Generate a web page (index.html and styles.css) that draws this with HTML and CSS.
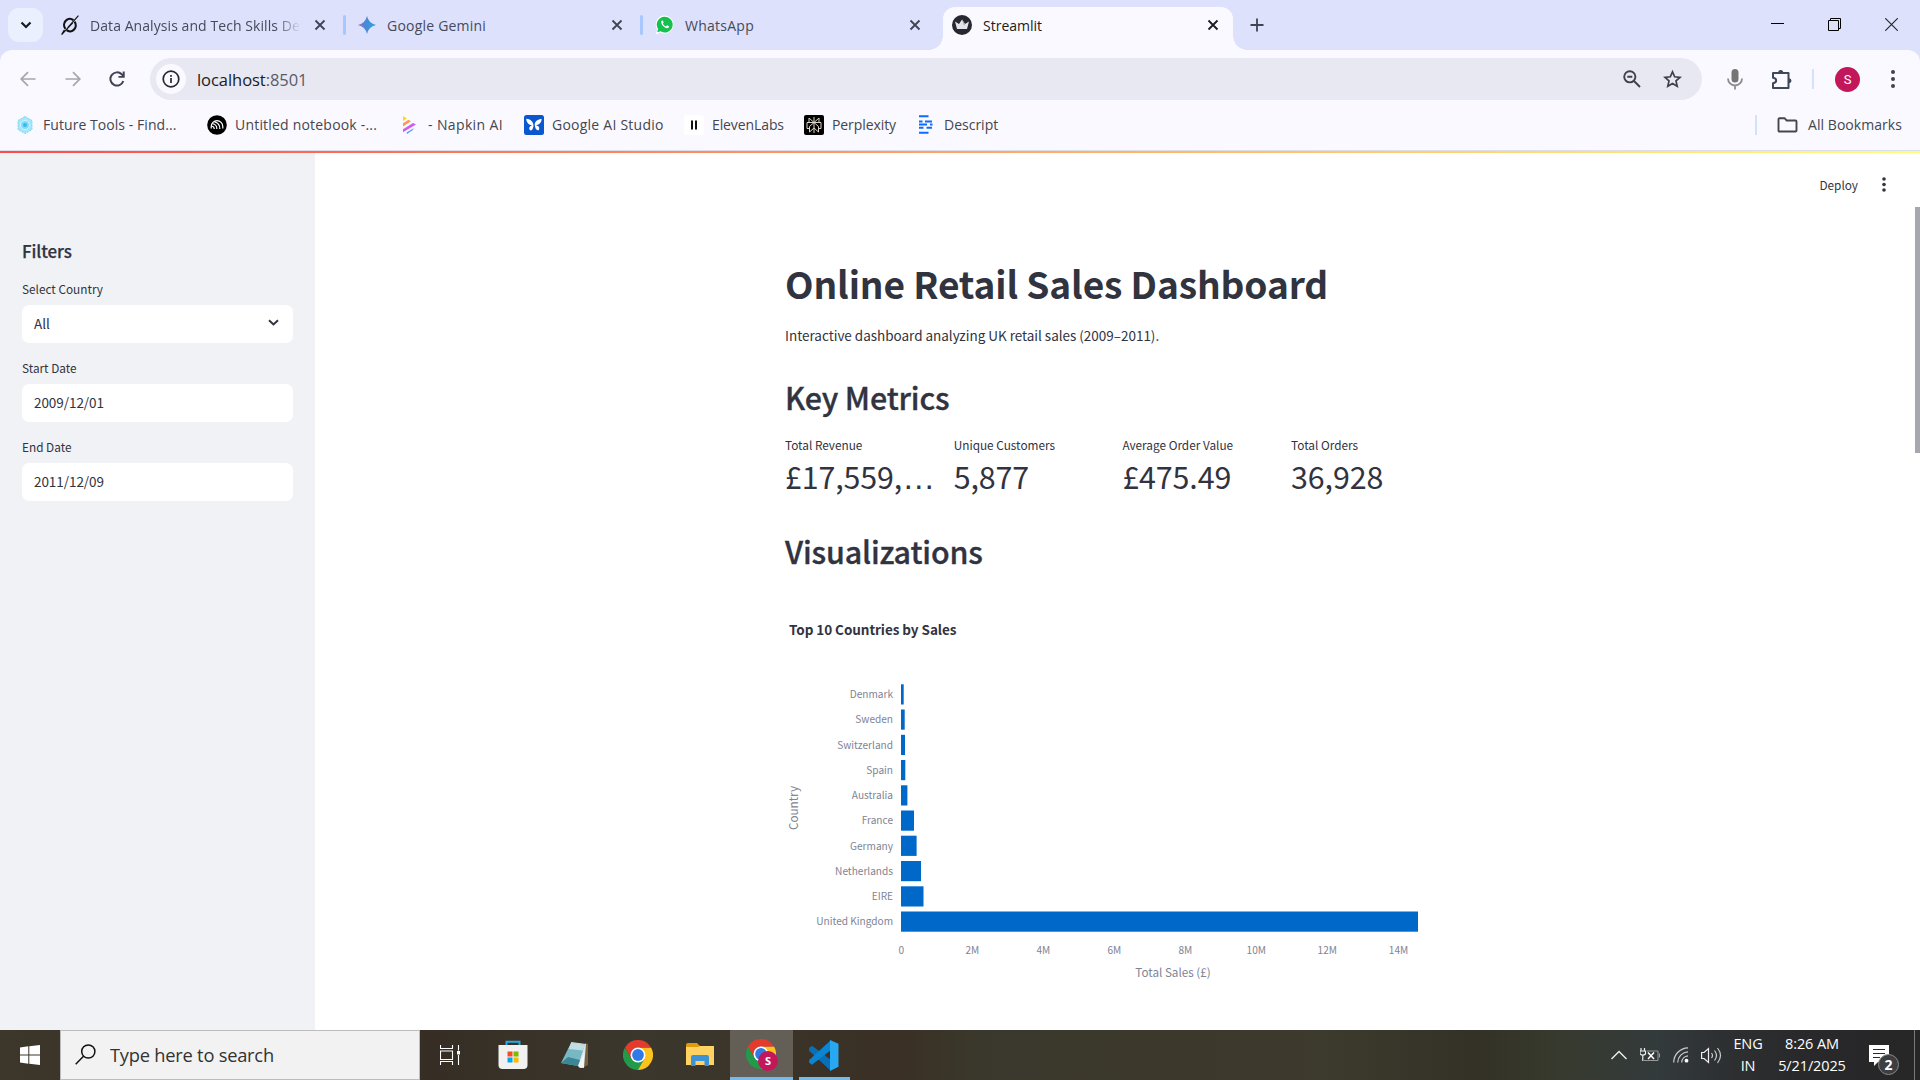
FILE: index.html
```html
<!DOCTYPE html>
<html lang="en">
<head>
<meta charset="utf-8">
<title>Streamlit</title>
<link rel="stylesheet" href="styles.css">
</head>
<body>
<svg class="defs" width="0" height="0" aria-hidden="true">
  <symbol id="x" viewBox="0 0 12 12"><path d="M1.500 1.500l9 9M10.500 1.500l-9 9" fill="none" stroke="currentColor" stroke-width="1.800"/></symbol>
  <symbol id="chrome" viewBox="0 0 30 30">
    <path d="M15 7.500H28A15 15 0 0 1 15 30z" fill="#fcc31e"/>
    <path d="M2 7.500L8.500 18.700L15 22L21.500 18.700L15 30A15 15 0 0 1 2 7.500z" fill="#229a49"/>
    <path d="M2 7.500A15 15 0 0 1 28 7.500H15L8.500 18.700z" fill="#e33b2e"/>
    <circle cx="15" cy="15" r="7.500" fill="#fff"/><circle cx="15" cy="15" r="5.900" fill="#3079e8"/>
  </symbol>
</svg>

<header class="tabstrip">
  <button class="tab-search"><svg width="12" height="8" viewBox="0 0 12 8"><path d="M1.500 1.500L6 6l4.500-4.500" fill="none" stroke="#1b1b1f" stroke-width="2.200"/></svg></button>
  <div class="tab tab-1">
    <svg class="fav" width="20" height="20" viewBox="0 0 20 22"><path d="M13.700 5.600A6.300 6.700 0 0 0 5 15.200M6.300 16.700A6.300 6.700 0 0 0 15 7.200" fill="none" stroke="#111" stroke-width="2.400"/><path d="M19.300.8L7.500 13.800M13 8.500L.8 21.500L3.700 16.500" fill="none" stroke="#111" stroke-width="1.300"/></svg>
    <span class="tab-title fade">Data Analysis and Tech Skills De</span>
    <svg class="close" width="12" height="12"><use href="#x"/></svg>
  </div>
  <i class="tab-sep"></i>
  <div class="tab tab-2">
    <svg class="fav" width="18" height="18" viewBox="0 0 18 18"><defs><linearGradient id="gem" x1="0" x2="1"><stop offset="0" stop-color="#9b72cb"/><stop offset=".4" stop-color="#4a87d6"/><stop offset="1" stop-color="#2ba6e0"/></linearGradient></defs><path d="M9 0Q10.700 7.300 18 9Q10.700 10.700 9 18Q7.300 10.700 0 9Q7.300 7.300 9 0z" fill="url(#gem)"/></svg>
    <span class="tab-title">Google Gemini</span>
    <svg class="close" width="12" height="12"><use href="#x"/></svg>
  </div>
  <i class="tab-sep"></i>
  <div class="tab tab-3">
    <svg class="fav" width="19" height="20" viewBox="0 0 19 20"><path d="M9.500.5a9 9 0 1 1-4.200 17L.5 19.500l1.800-5A9 9 0 0 1 9.500.5z" fill="#fff"/><path d="M9.500 1.700a7.900 7.900 0 1 1-3.900 14.600L2.200 17.300l1-3.200A7.900 7.900 0 0 1 9.500 1.700z" fill="#15c14e"/><path d="M6.800 5.500c-2.300 2 2.200 7.800 5.300 7.800 1.200 0 2-1 1.900-2l-2-1-1 1.200c-1.500-.6-2.600-1.700-3.200-3l.9-1-.9-2z" fill="#fff"/></svg>
    <span class="tab-title">WhatsApp</span>
    <svg class="close" width="12" height="12"><use href="#x"/></svg>
  </div>
  <div class="tab tab-active">
    <svg class="fav" width="20" height="20" viewBox="0 0 20 20"><circle cx="10" cy="10" r="10" fill="#262730"/><path d="M3 6.500l4 2.500 3-4.500L13 9l4-2.500L15 14H5z" fill="#e4e4e8"/><path d="M10 4.500L13 9l-1 2z" fill="#aaa"/></svg>
    <span class="tab-title">Streamlit</span>
    <svg class="close" width="12" height="12"><use href="#x"/></svg>
  </div>
  <svg class="newtab" width="14" height="14" viewBox="0 0 14 14"><path d="M7 .5v13M.5 7h13" stroke="#3f4354" stroke-width="1.800"/></svg>
  <div class="winctl">
    <svg width="13" height="13" viewBox="0 0 13 13"><path d="M0 5.500h13" stroke="#000"/></svg>
    <svg width="13" height="13" viewBox="0 0 13 13"><path d="M.5 2.500h10v10H.5zM2.500 2.500v-2h10v10h-2" fill="none" stroke="#000"/></svg>
    <svg width="13" height="13" viewBox="0 0 13 13"><path d="M.3.3l12.400 12.400M12.700.3L.3 12.700" stroke="#222" stroke-width="1.100"/></svg>
  </div>
</header>

<section class="chrome-top">
  <div class="toolbar">
    <div class="nav">
      <svg width="16" height="16" viewBox="0 0 16 16"><path d="M15.500 8H1.500M8 1.200L1.200 8L8 14.800" fill="none" stroke="#a5a6ae" stroke-width="1.700"/></svg>
      <svg width="16" height="16" viewBox="0 0 16 16"><path d="M.5 8h14M8 1.200L14.800 8L8 14.800" fill="none" stroke="#a5a6ae" stroke-width="1.700"/></svg>
      <svg width="16" height="16" viewBox="0 0 16 16"><path d="M14.300 10A6.600 6.600 0 1 1 12.700 3.300L14.500 5" fill="none" stroke="#3f4354" stroke-width="2"/><path d="M15.700.5V6.800H9.500V5H13.700V.5z" fill="#3f4354"/></svg>
    </div>
    <div class="omnibox">
      <span class="info"><svg width="18" height="18" viewBox="0 0 18 18"><circle cx="9" cy="9" r="7.800" fill="none" stroke="#27282e" stroke-width="1.700"/><path d="M9 8v5M9 5v1.700" stroke="#27282e" stroke-width="1.700"/></svg></span>
      <span class="url">localhost<span>:8501</span></span>
      <svg class="mag" width="18" height="18" viewBox="0 0 18 18"><circle cx="6.800" cy="6.800" r="5.600" fill="none" stroke="#3f4048" stroke-width="1.900"/><path d="M11 11l6 6M4.300 6.800h5" stroke="#3f4048" stroke-width="1.900"/></svg>
      <svg width="19" height="18" viewBox="0 0 19 18"><path d="M9.500 1.800l2.200 5 5.300.5-4 3.600 1.200 5.300-4.700-2.800-4.700 2.800L6 10.900 2 7.300l5.300-.5z" fill="none" stroke="#3f4048" stroke-width="1.700"/></svg>
    </div>
    <svg class="mic" width="16" height="21" viewBox="0 0 16 21"><rect x="4.500" y="0" width="7" height="13.500" rx="3.500" fill="#757575"/><path d="M1 9.500a7 7 0 0 0 14 0M8 16.500V20.500" fill="none" stroke="#8c8c8c" stroke-width="1.800"/></svg>
    <svg class="ext" width="21" height="21" viewBox="0 0 21 21"><path d="M2 4h15.500v15H2v-4.800c4.200-.6 4.200-4.800 0-5.400z" fill="none" stroke="#3f4759" stroke-width="2" stroke-linejoin="round"/><path d="M7.200 3.500a2.500 2.500 0 0 1 5 0zM18 9.200a2.500 2.500 0 0 1 0 5z" fill="#3f4759"/></svg>
    <i class="tool-sep"></i>
    <span class="avatar">S</span>
    <svg class="kebab" width="4" height="20" viewBox="0 0 4 20"><g fill="#3f4354"><circle cx="2" cy="3" r="2"/><circle cx="2" cy="10" r="2"/><circle cx="2" cy="17" r="2"/></g></svg>
  </div>
  <nav class="bookmarks">
    <a class="bm bm-1"><svg width="16" height="18" viewBox="0 0 16 18"><path d="M8 .5l7 4v9l-7 4-7-4v-9z" fill="#a5e6fb" stroke="#7bd6f5" stroke-dasharray="2 1"/><circle cx="8" cy="9" r="4.500" fill="#7fd9f8" stroke="#d6f5ff"/><circle cx="8" cy="9" r="2" fill="#35bdf0"/></svg><span>Future Tools - Find...</span></a>
    <a class="bm bm-2"><svg width="20" height="20" viewBox="0 0 20 20"><circle cx="10" cy="10" r="9.800" fill="#000"/><g fill="none" stroke="#fff" stroke-width="1.200"><path d="M4.200 13.500v-2a5.800 5.800 0 0 1 11.600 0v2"/><path d="M4.500 11a3.300 3.300 0 0 1 2.800 3M5.500 8.700a5 5 0 0 1 4.300 5.300M7.500 6.800A6.500 6.500 0 0 1 12.800 14"/></g></svg><span>Untitled notebook -...</span></a>
    <a class="bm bm-3"><svg width="15" height="18" viewBox="0 0 15 18"><path d="M1 0v5l4-2.600z" fill="#ffd911"/><path d="M1 7.200L6.500 3.700l2.500 1.600L1 10.400z" fill="#ff9757"/><path d="M1 13.300L11 6.900l3 1.600L1 16.300z" fill="#cc5df5"/><path d="M4.500 16.500L12 11.900l-1.500 2.300L5 18z" fill="#5a9cf8"/></svg><span>- Napkin AI</span></a>
    <a class="bm bm-4"><svg width="20" height="20" viewBox="0 0 20 20"><rect width="20" height="20" rx="2.500" fill="#0b57d0"/><path d="M9.500 10C9 6.500 6 3.700 2.200 3.700c.2 3.500 2.300 6.300 6 6.500C5.500 11 4.500 13 5.700 15c2.200 1.500 3.800-1.500 3.800-5zM10.700 9.500C11 6.300 14 4 17.600 4c0 3-2 5.800-5.800 6.300 3 .5 4.200 2.500 3.100 4.600-2 1.200-4-1.200-4.200-5.400z" fill="#fff"/></svg><span>Google AI Studio</span></a>
    <a class="bm bm-5"><svg width="20" height="20" viewBox="0 0 20 20"><rect width="20" height="20" rx="3" fill="#fff"/><path d="M8 5.500v9M12 5.500v9" stroke="#111" stroke-width="2"/></svg><span>ElevenLabs</span></a>
    <a class="bm bm-6"><svg width="20" height="20" viewBox="0 0 20 20"><rect width="20" height="20" rx="2" fill="#000"/><path d="M10 2v16M5 3l5 4.500L15 3v4.500H5zM3 7.500h14v6h-2.500M3 7.500v6h2.500M10 7.500L5.500 11.500v5.500L10 13l4.500 4v-5.500z" fill="none" stroke="#ddd6c8" stroke-width="1"/></svg><span>Perplexity</span></a>
    <a class="bm bm-7"><svg width="14" height="19" viewBox="0 0 14 19"><path d="M0 1.200h9.500M0 6.500h3.500M6 6.500h7M0 9.600h8M11 9.600h2.500M0 12.700h4.500M7.500 12.700h5.500M0 17.700h9.500" stroke="#0a6cff" stroke-width="2"/></svg><span>Descript</span></a>
    <i class="bm-sep"></i>
    <a class="bm bm-all"><svg width="21" height="16" viewBox="0 0 21 16"><path d="M2.500 1.200h5l2.200 2.300h8.800q1 0 1 1v9q0 1-1 1H2.500q-1 0-1-1v-11q0-1.300 1-1.300z" fill="none" stroke="#45464e" stroke-width="1.900"/></svg><span>All Bookmarks</span></a>
  </nav>
</section>
<div class="decoration"></div>

<main class="app">
  <aside class="sidebar">
    <h2>Filters</h2>
    <label>Select Country</label>
    <div class="field select"><span>All</span><svg width="11" height="8" viewBox="0 0 11 8"><path d="M1 1.300l4.500 4.200L10 1.300" fill="none" stroke="#31333f" stroke-width="2"/></svg></div>
    <label>Start Date</label>
    <div class="field"><span>2009/12/01</span></div>
    <label>End Date</label>
    <div class="field"><span>2011/12/09</span></div>
  </aside>
  <section class="content">
    <div class="app-toolbar"><span>Deploy</span><svg width="4" height="15" viewBox="0 0 4 15"><g fill="#31333f"><circle cx="2" cy="2" r="1.800"/><circle cx="2" cy="7.500" r="1.800"/><circle cx="2" cy="13" r="1.800"/></g></svg></div>
    <div class="scroll-area">
      <article class="page">
        <h1>Online Retail Sales Dashboard</h1>
        <p>Interactive dashboard analyzing UK retail sales (2009–2011).</p>
        <h2>Key Metrics</h2>
        <div class="metrics">
          <div><small>Total Revenue</small><b>£17,559,<span class="ellipsis">…</span></b></div>
          <div><small>Unique Customers</small><b>5,877</b></div>
          <div><small>Average Order Value</small><b>£475.49</b></div>
          <div><small>Total Orders</small><b>36,928</b></div>
        </div>
        <h2 class="viz">Visualizations</h2>
        <svg class="chart" width="660" height="380" viewBox="785 620 660 380">
          <text class="chart-title" x="789" y="635">Top 10 Countries by Sales</text>
          <g class="bars">
            <rect x="901" y="684.300" width="2.700" height="20.200"/>
            <rect x="901" y="709.500" width="3.700" height="20.200"/>
            <rect x="901" y="734.800" width="4" height="20.200"/>
            <rect x="901" y="760" width="4.300" height="20.200"/>
            <rect x="901" y="785.300" width="6.400" height="20.200"/>
            <rect x="901" y="810.500" width="13" height="20.200"/>
            <rect x="901" y="835.700" width="15.600" height="20.200"/>
            <rect x="901" y="861" width="20" height="20.200"/>
            <rect x="901" y="886.300" width="22.500" height="20.200"/>
            <rect x="901" y="911.500" width="517" height="20.200"/>
          </g>
          <g class="tick cats">
            <text x="893" y="698">Denmark</text>
            <text x="893" y="723">Sweden</text>
            <text x="893" y="749">Switzerland</text>
            <text x="893" y="774">Spain</text>
            <text x="893" y="799">Australia</text>
            <text x="893" y="824">France</text>
            <text x="893" y="850">Germany</text>
            <text x="893" y="875">Netherlands</text>
            <text x="893" y="900">EIRE</text>
            <text x="893" y="925">United Kingdom</text>
          </g>
          <g class="tick vals">
            <text x="901.300" y="954">0</text><text x="972.300" y="954">2M</text><text x="1043.300" y="954">4M</text><text x="1114.300" y="954">6M</text>
            <text x="1185.300" y="954">8M</text><text x="1256.300" y="954">10M</text><text x="1327.300" y="954">12M</text><text x="1398.500" y="954">14M</text>
          </g>
          <text class="axis" x="1173" y="977">Total Sales (£)</text>
          <text class="axis" transform="translate(798 808) rotate(-90)">Country</text>
        </svg>
      </article>
      <div class="scrollbar"></div>
    </div>
  </section>
</main>

<footer class="taskbar">
  <div class="start"><svg width="20" height="20" viewBox="0 0 20 20"><path d="M0 2.500L8.300 1.300V9.500H0zM9.300 1.200L20 0V9.500H9.300zM0 10.500H8.300V18.700L0 17.500zM9.300 10.500H20V20L9.300 18.800z" fill="#fff"/></svg></div>
  <div class="search"><svg width="21" height="21" viewBox="0 0 21 21"><circle cx="13.300" cy="7.500" r="6.600" fill="none" stroke="#111" stroke-width="1.500"/><path d="M8.500 12.300L.7 20.200" stroke="#111" stroke-width="1.500"/></svg><span>Type here to search</span></div>
  <div class="tasks">
    <div class="task task-view"><svg width="20" height="20" viewBox="0 0 20 20"><path d="M.5 0v3.500h12V0M.5 20v-3.500h12V20M.5 6h12v8.500H.5zM18.500 0v5.500M18.500 10v10" fill="none" stroke="#fff" stroke-width="1.100"/><path d="M17 6h3v3.500h-3z" fill="#fff"/></svg></div>
    <div class="task"><svg width="30" height="30" viewBox="0 0 30 30"><path d="M8.500 6V1.800h13V6" fill="none" stroke="#29a9e8" stroke-width="2"/><path d="M.5 5h29v20q0 4-4 4h-21q-4 0-4-4z" fill="#f1f1f1"/><path d="M9.500 11.500h5v5h-5z" fill="#f25022"/><path d="M15.500 11.500h5v5h-5z" fill="#7fba00"/><path d="M9.500 17.500h5v5h-5z" fill="#00a4ef"/><path d="M15.500 17.500h5v5h-5z" fill="#ffb900"/></svg></div>
    <div class="task"><svg width="28" height="28" viewBox="0 0 28 28"><path d="M24 2l3 1v21l-4 2z" fill="#79603c"/><path d="M10 1l15 2-2 24-5-.5z" fill="#dbe8ea"/><path d="M10 2l14 1.500L17 25 0 22z" fill="#78b8c4"/><path d="M10 2l14 1.500-2 6L7.500 8z" fill="#c2dde2"/><path d="M0 22l7-6 12 3-2 6z" fill="#3c8795"/><path d="M17 25l6-12v13l-3 1z" fill="#f2f5f5"/></svg></div>
    <div class="task"><svg width="30" height="30"><use href="#chrome"/></svg></div>
    <div class="task"><svg width="28" height="24" viewBox="0 0 28 24"><path d="M0 2q0-2 2-2h9l3 3h13v6H0z" fill="#e09a0b"/><path d="M0 4h12l2-1h14v19H0z" fill="#ffd262"/><path d="M5 23V14q0-2 2-2h14q2 0 2 2v9h-4.500v-5h-9v5z" fill="#3e92d8"/></svg></div>
    <div class="task current"><svg width="32" height="32" viewBox="0 0 32 32"><use href="#chrome" x="0" y="0" width="30" height="30"/><circle cx="22" cy="22" r="10" fill="#c2185b"/><text x="22" y="26">S</text></svg></div>
    <div class="task running"><svg width="31" height="31" viewBox="0 0 31 31"><path d="M1 8l3-2.300L23 20v11L1.200 11z" fill="#0a6fb5"/><path d="M1 22.500l3 2.300L23 10V0L1.200 20z" fill="#0a85d1"/><path d="M22 0l8.500 3.800v23L22 31z" fill="#29a8f2"/></svg></div>
  </div>
  <div class="tray">
    <svg class="t-up" width="16" height="10" viewBox="0 0 16 10"><path d="M.5 9L8 1.500 15.500 9" fill="none" stroke="#eee" stroke-width="1.400"/></svg>
    <svg class="t-bat" width="20" height="15" viewBox="0 0 20 15"><path d="M1 0v3M4.500 0v3M0 3h5.500v3Q2.800 8.500 0 6zM2.800 7v6" fill="none" stroke="#eee" stroke-width="1.200"/><path d="M7 3h11v9.500H4M19.500 5.500v4" fill="none" stroke="#999"/><path d="M8 4.500l6 6.500M14 4.500L8 11" stroke="#fff" stroke-width="1.500"/></svg>
    <svg class="t-wifi" width="16" height="16" viewBox="0 0 16 16"><g fill="none" stroke="#ccc" stroke-width="1.200"><path d="M.7 15.500A14.800 14.800 0 0 1 15 .8M4.700 15.500A10.800 10.800 0 0 1 15 4.900M8.700 15.500A7 7 0 0 1 15 8.900"/></g><circle cx="13.500" cy="13.700" r="1.900" fill="#fff"/></svg>
    <svg class="t-vol" width="21" height="17" viewBox="0 0 21 17"><path d="M.6 5.500h2.500L7.500 1.500v14L3.100 11.500H.6z" fill="none" stroke="#eee" stroke-width="1.200"/><g fill="none" stroke="#ccc" stroke-width="1.200"><path d="M10.500 6q2 2.500 0 5M13.500 3.500q4 5 0 10M16.500 1q6 7.500 0 15"/></g></svg>
    <div class="lang"><span>ENG</span><span>IN</span></div>
    <div class="clock"><span>8:26 AM</span><span>5/21/2025</span></div>
    <svg class="t-note" width="31" height="31" viewBox="0 0 31 31"><path d="M0 0h20v17H9l-4 4v-4H0z" fill="#fff"/><path d="M4 4.500h12M4 8.500h12M4 12.500h7" stroke="#2b2b2c" stroke-width="1.200"/><circle cx="19.500" cy="19.500" r="10" fill="#3d3e40" stroke="#8a8a8a"/><text x="19.500" y="24.500">2</text></svg>
    <i class="peek"></i>
  </div>
</footer>
</body>
</html>
```
FILE: styles.css
```css
* { box-sizing: border-box; }
body { margin: 0; width: 1920px; height: 1080px; overflow: hidden; background: #fff; font-family: "Open Sans", sans-serif; display: flex; flex-direction: column; }
svg { display: block; flex: none; }
i { flex: none; }
.defs { position: absolute; }

.tabstrip { height: 50px; background: #dde1fb; display: flex; align-items: center; color: #454a5c; font-size: 14px; letter-spacing: .15px; flex: none; }
.tab-search { margin-left: 8px; width: 35px; height: 34px; border: 0; border-radius: 11px; background: #ebf0ff; display: grid; place-items: center; padding: 0; flex: none; }
.tab { display: flex; align-items: center; height: 43px; flex: none; }
.tab .close { margin-left: auto; color: #3f4354; }
.tab-title { white-space: nowrap; overflow: hidden; }
.tab-1 { margin-left: 17px; width: 266px; gap: 10px; }
.tab-1 .tab-title { width: 211px; letter-spacing: .07px; }
.fade { -webkit-mask-image: linear-gradient(90deg, #000 88%, transparent); mask-image: linear-gradient(90deg, #000 88%, transparent); }
.tab-sep { width: 3px; height: 20px; border-radius: 2px; background: #a8c7ff; margin-left: 17px; }
.tab-2 { margin-left: 12px; width: 265px; gap: 11px; letter-spacing: .21px; }
.tab-3 { margin-left: 12px; width: 266px; gap: 11px; letter-spacing: .26px; }
.tab-active { position: relative; margin: 7px 0 0 22px; width: 290px; padding: 0 14px 7px 9px; gap: 11px; border-radius: 12px 12px 0 0; background: #faf9ff; color: #1b1b20; letter-spacing: 0; }
.tab-active .close { color: #1b1b20; }
.tab-active::before, .tab-active::after { content: ""; position: absolute; bottom: 0; width: 14px; height: 14px; }
.tab-active::before { left: -14px; background: radial-gradient(circle at 0 0, transparent 13.5px, #faf9ff 14px); }
.tab-active::after { right: -14px; background: radial-gradient(circle at 100% 0, transparent 13.5px, #faf9ff 14px); }
.newtab { margin-left: 17px; }
.winctl { margin-left: auto; display: flex; gap: 44px; padding: 0 22px 1px 0; }

.chrome-top { height: 101px; flex: none; background: linear-gradient(#dde1fb 14px, transparent 14px); border-bottom: 1px solid #dcdde8; }
.toolbar { height: 58px; background: #faf9ff; border-radius: 12px 12px 0 0; display: flex; align-items: center; padding-left: 20px; }
.nav { display: flex; gap: 28.500px; width: 130px; }
.omnibox { width: 1552px; height: 42px; border-radius: 21px; background: #e8e8f2; display: flex; align-items: center; padding: 0 20px 0 6px; }
.info { width: 30px; height: 30px; border-radius: 50%; background: #faf9ff; display: grid; place-items: center; }
.url { margin-left: 11px; font-size: 16.500px; letter-spacing: -.05px; color: #1b1b20; }
.url span { color: #5a5b66; }
.mag { margin: 0 22px 0 auto; }
.mic { margin-left: 25px; }
.ext { margin-left: 28px; }
.tool-sep { width: 2px; height: 20px; background: #d3e1ff; margin-left: 20px; }
.avatar { margin-left: 21px; width: 25px; height: 25px; border-radius: 50%; background: #c2185b; color: #fff; font: 13px/25px Roboto, sans-serif; text-align: center; }
.kebab { margin-left: 31px; }
.bookmarks { height: 42px; padding-bottom: 9px; background: #faf9ff; display: flex; align-items: center; font-size: 14px; color: #45464e; white-space: nowrap; }
.bm { display: flex; align-items: center; flex: none; }
.bm-1 { margin-left: 17px; width: 190px; gap: 10px; letter-spacing: .06px; }
.bm-2 { width: 195px; gap: 8px; letter-spacing: .2px; }
.bm-3 { width: 122px; gap: 11px; letter-spacing: .37px; }
.bm-4 { width: 160px; gap: 8px; letter-spacing: .24px; }
.bm-5 { width: 120px; gap: 8px; letter-spacing: -.1px; }
.bm-6 { width: 115px; gap: 8px; letter-spacing: -.08px; }
.bm-7 { gap: 11px; }
.bm-sep { width: 2px; height: 20px; background: #d3e1ff; margin-left: auto; }
.bm-all { margin-left: 20px; gap: 10px; padding-right: 18px; letter-spacing: .05px; }
.decoration { height: 2px; flex: none; background: linear-gradient(90deg, #ff4b4b, #fffd80); }

.app { height: 877px; flex: none; display: flex; font-family: "Noto Sans CJK SC", sans-serif; color: #31333f; }
.sidebar { width: 315px; background: #f0f2f6; padding: 83px 22px 0; }
.sidebar h2 { margin: 0; font-size: 16.900px; line-height: 30px; font-weight: 500; letter-spacing: -.06px; -webkit-text-stroke: .25px #31333f; }
.sidebar label { display: block; font-size: 11.800px; line-height: 20px; margin-top: 15.500px; }
.sidebar h2 + label { margin-top: 13px; }
.field { height: 37.500px; margin-top: 6px; border-radius: 7px; background: #fff; font-size: 13.500px; letter-spacing: -.06px; display: flex; align-items: center; justify-content: space-between; padding: 0 14px 1px 12px; }
.content { flex: 1; display: flex; flex-direction: column; }
.app-toolbar { height: 54px; display: flex; align-items: center; justify-content: flex-end; gap: 24px; padding: 8px 34px 0 0; font-size: 11.800px; }
.scroll-area { flex: 1; display: flex; }
.page { margin-left: 470px; width: 660px; }
.page h1 { margin: 49px 0 0; font-size: 37.100px; line-height: 54px; font-weight: 700; letter-spacing: -.12px; white-space: nowrap; }
.page p { margin: 13px 0 0; font-size: 13.500px; line-height: 24px; letter-spacing: -.02px; }
.page h2 { margin: 28px 0 0; font-size: 30.400px; line-height: 44px; font-weight: 500; letter-spacing: -.14px; -webkit-text-stroke: .35px #31333f; }
.metrics { display: flex; margin-top: 16px; }
.metrics div { width: 168.700px; flex: none; white-space: nowrap; display: flex; flex-direction: column; }
.metrics small { font-size: 11.800px; line-height: 20px; }
.metrics b { font-weight: 400; font-size: 30.400px; line-height: 43px; letter-spacing: -.12px; }
.ellipsis { font-family: "Liberation Sans", sans-serif; font-size: 33px; line-height: 1px; }
.page h2.viz { margin-top: 31px; }
.chart { margin-top: 47px; overflow: visible; }
.bars { fill: #0068c9; }
.chart-title { font-size: 13.500px; font-weight: 700; fill: #31333f; letter-spacing: -.06px; }
.tick { font-size: 10.100px; fill: #808495; }
.cats { text-anchor: end; }
.vals, .axis { text-anchor: middle; }
.axis { font-size: 11.700px; fill: #808495; }
.scrollbar { margin-left: auto; width: 5px; height: 246px; background: #a6a8ae; }

.taskbar { height: 50px; flex: none; display: flex; color: #fff; background: linear-gradient(90deg, #3d362b 0, #362e24 430px, #3b372c 640px, #3a3025 900px, #3a382c 980px, #3d382c 1200px, #3d3b2e 1320px, #343126 1470px, #373a2e 1560px, #333a3c 1660px, #2d2f31 1730px, #29292b 1800px, #262627 1920px); }
.start { width: 60px; display: grid; place-items: center; }
.search { width: 360px; background: #f2f2f2; border: 1px solid #bcbcbc; display: flex; align-items: center; padding: 0 0 1px 14px; gap: 14px; color: #333; font-size: 18.300px; letter-spacing: -.23px; }
.tasks { display: flex; margin-left: -1px; }
.task { width: 62.300px; display: grid; place-items: center; padding-left: 1px; }
.task-view, .running { padding-left: 0; }
.current { background: linear-gradient(#635f56 47px, #76b9ed 47px); }
.current text { font: 700 11px "Open Sans", sans-serif; fill: #fff; text-anchor: middle; }
.running { background: linear-gradient(#76b9ed, #76b9ed) no-repeat 6px 47px / 51px 3px; }
.tray { margin-left: auto; display: flex; align-items: center; font-size: 14.500px; letter-spacing: -.12px; }
.t-bat { margin-left: 13px; }
.t-wifi { margin-left: 13px; }
.t-vol { margin-left: 12px; }
.lang, .clock { display: flex; flex-direction: column; align-items: center; line-height: 22.500px; }
.lang { width: 28px; margin-left: 12px; }
.clock { width: 68px; margin-left: 16px; white-space: nowrap; }
.t-note { margin: 10px 0 0 23px; }
.t-note text { font: 700 14px "Open Sans", sans-serif; fill: #fff; text-anchor: middle; }
.peek { width: 1px; height: 50px; margin: 0 5px 0 14px; background: #77787a; }
```
